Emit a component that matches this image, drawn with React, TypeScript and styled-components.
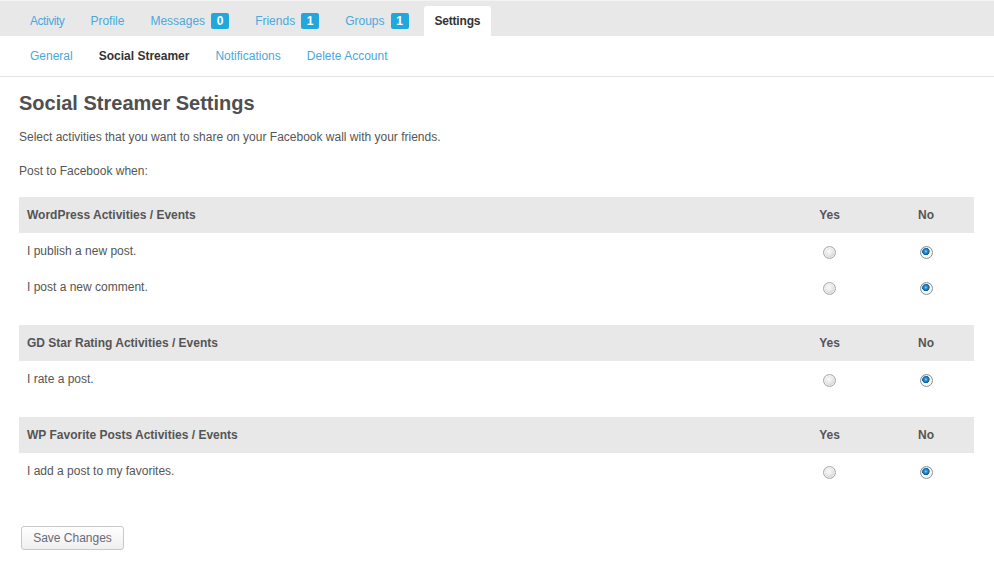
import React from "react";
import styled, { createGlobalStyle } from "styled-components";

const Global = createGlobalStyle`
  html, body { margin: 0; padding: 0; background: #fff; }
  body { font-family: "Liberation Sans", Arial, sans-serif; font-size: 12px; color: #555; }
  * { box-sizing: border-box; }
`;

const Page = styled.div`
  width: 994px;
  min-height: 571px;
  background: #fff;
`;

const MainNav = styled.ul`
  list-style: none;
  margin: 0;
  padding: 5px 0 0 19px;
  display: flex;
  gap: 4px;
  height: 36px;
  background: #e8e8e8;
  border-top: 1px solid #f3f3f3;
`;

const NavItem = styled.li<{ $active?: boolean }>`
  display: flex;
  align-items: center;
  height: 30px;
  padding: 0 11px;
  line-height: 30px;
  font-size: 12px;
  color: ${(p) => (p.$active ? "#333" : "#4aa8dc")};
  font-weight: ${(p) => (p.$active ? "bold" : "normal")};
  background: ${(p) => (p.$active ? "#fff" : "transparent")};
  border-radius: ${(p) => (p.$active ? "3px 3px 0 0" : "0")};
  letter-spacing: ${(p) => (p.$active ? "-0.2px" : "0")};
  cursor: pointer;

  &:first-child {
    letter-spacing: -0.45px;
  }
`;

const Badge = styled.span`
  display: inline-flex;
  align-items: center;
  justify-content: center;
  width: 18px;
  height: 16px;
  margin-left: 6px;
  border-radius: 2px;
  background: #22a7dd;
  color: #fff;
  font-weight: bold;
  font-size: 12px;
  line-height: 16px;
  letter-spacing: 0;
`;

const SubNav = styled.ul`
  list-style: none;
  margin: 0;
  padding: 0 0 0 19px;
  display: flex;
  gap: 4px;
  height: 41px;
  border-bottom: 1px solid #e6e6e6;
`;

const SubItem = styled.li<{ $active?: boolean }>`
  padding: 0 11px;
  line-height: 40px;
  font-size: 12px;
  color: ${(p) => (p.$active ? "#333" : "#4aa8dc")};
  font-weight: ${(p) => (p.$active ? "bold" : "normal")};
  cursor: pointer;
`;

const Content = styled.div`
  padding: 14px 20px 0 19px;
`;

const Title = styled.h2`
  margin: 0;
  font-size: 20px;
  line-height: 24px;
  font-weight: bold;
  color: #4f4f4f;
`;

const Para = styled.p<{ $top: number }>`
  margin: ${(p) => p.$top}px 0 0;
  font-size: 12px;
  line-height: 18px;
  color: #555;
`;

const Form = styled.form`
  margin-top: 17px;
`;

const Table = styled.div`
  width: 955px;
  margin-bottom: 20px;
`;

const Row = styled.div<{ $head?: boolean }>`
  display: grid;
  grid-template-columns: 1fr 97px 96px;
  align-items: center;
  height: 36px;
  background: ${(p) => (p.$head ? "#e8e8e8" : "#fff")};
  font-weight: ${(p) => (p.$head ? "bold" : "normal")};
  color: #555;
  font-size: 12px;
`;

const Label = styled.div`
  padding-left: 8px;
`;

const Cell = styled.div`
  display: flex;
  justify-content: center;
  align-items: center;
`;

const Radio = styled.input.attrs({ type: "radio" })`
  appearance: none;
  -webkit-appearance: none;
  margin: 3px 0 0;
  width: 13px;
  height: 13px;
  border-radius: 50%;
  border: 1px solid #a9a9a9;
  background: radial-gradient(circle at 45% 40%, #fbfbfb 0, #e6e6e6 4px, #cfcfcf 6px);
  box-shadow: inset 0 0 0 1px rgba(255, 255, 255, 0.6);
  cursor: pointer;

  &:checked {
    border-color: #8e8e8e;
    background:
      radial-gradient(circle at 44% 40%, #8fd3ff 0, #2a8fd4 1.5px, #0d5b9c 3.5px, transparent 4px),
      radial-gradient(circle, #fff 0, #f4f4f4 4.5px, #d6d6d6 6px);
  }
`;

const SaveButton = styled.button`
  margin: 17px 0 0 2px;
  width: 103px;
  height: 24px;
  padding: 0;
  border: 1px solid #c8c8c8;
  border-radius: 3px;
  background: linear-gradient(#ffffff, #efefef);
  color: #6a6a78;
  font-family: "Liberation Sans", Arial, sans-serif;
  font-size: 12px;
  cursor: pointer;
`;

const groups = [
  {
    title: "WordPress Activities / Events",
    rows: ["I publish a new post.", "I post a new comment."],
  },
  { title: "GD Star Rating Activities / Events", rows: ["I rate a post."] },
  { title: "WP Favorite Posts Activities / Events", rows: ["I add a post to my favorites."] },
];

export default function App() {
  return (
    <Page>
      <Global />
      <MainNav>
        <NavItem>Activity</NavItem>
        <NavItem>Profile</NavItem>
        <NavItem>
          Messages<Badge>0</Badge>
        </NavItem>
        <NavItem>
          Friends<Badge>1</Badge>
        </NavItem>
        <NavItem>
          Groups<Badge>1</Badge>
        </NavItem>
        <NavItem $active>Settings</NavItem>
      </MainNav>
      <SubNav>
        <SubItem>General</SubItem>
        <SubItem $active>Social Streamer</SubItem>
        <SubItem>Notifications</SubItem>
        <SubItem>Delete Account</SubItem>
      </SubNav>
      <Content>
        <Title>Social Streamer Settings</Title>
        <Para $top={13}>Select activities that you want to share on your Facebook wall with your friends.</Para>
        <Para $top={16}>Post to Facebook when:</Para>
        <Form onSubmit={(e) => e.preventDefault()}>
          {groups.map((g, gi) => (
            <Table key={gi}>
              <Row $head>
                <Label>{g.title}</Label>
                <Cell>Yes</Cell>
                <Cell>No</Cell>
              </Row>
              {g.rows.map((r, ri) => (
                <Row key={ri}>
                  <Label>{r}</Label>
                  <Cell>
                    <Radio name={`g${gi}r${ri}`} value="yes" />
                  </Cell>
                  <Cell>
                    <Radio name={`g${gi}r${ri}`} value="no" defaultChecked />
                  </Cell>
                </Row>
              ))}
            </Table>
          ))}
          <SaveButton type="submit">Save Changes</SaveButton>
        </Form>
      </Content>
    </Page>
  );
}
